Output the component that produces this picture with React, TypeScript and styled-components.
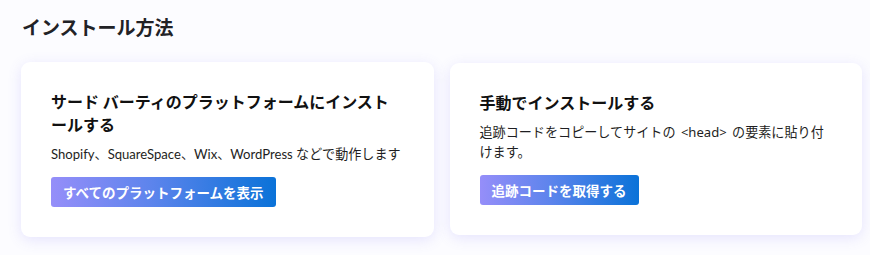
import styled, { createGlobalStyle } from "styled-components"

const GlobalStyle = createGlobalStyle`
    html, body {
        margin: 0;
        padding: 0;
        background-color: #fcfcff;
    }
    body {
        font-family: Lato, "Noto Sans CJK JP", sans-serif;
        color: #1b1b1f;
    }
`

const Page = styled.div`
    padding: 13px 8px 20px 21px;
`

const Heading = styled.h2`
    margin: 0 0 21px 1px;
    font-family: "Noto Sans CJK JP", sans-serif;
    font-size: 19px;
    line-height: 28px;
    font-weight: 700;
    color: #222226;
`

const CardGrid = styled.div`
    display: grid;
    grid-template-columns: 1fr 1fr;
    gap: 16px;
    align-items: start;
`

const Card = styled.div<{ $top?: number }>`
    background-color: #fff;
    border-radius: 9px;
    padding: 28px 30px 30px;
    margin-top: ${({ $top }) => $top ?? 0}px;
    box-shadow: 0 3px 14px rgba(110, 100, 245, 0.16);
`

const CardTitle = styled.h3`
    margin: 0 0 8px;
    font-family: "Noto Sans CJK JP", sans-serif;
    font-size: 16px;
    line-height: 23px;
    font-weight: 700;
    color: #111;
`

const CardText = styled.p`
    margin: 0 0 13px;
    font-size: 13.1px;
    line-height: 20px;
    color: #1e1e22;
`

const Code = styled.span`
    font-family: "Noto Sans", sans-serif;
    margin: 0 2px;
`

const GradientBtn = styled.button`
    display: inline-flex;
    align-items: center;
    height: 30px;
    padding: 0 12px;
    border: none;
    border-radius: 3px;
    background: linear-gradient(90deg, #958ef9 0%, #5c84ec 45%, #0a72d8 100%);
    color: #fff;
    font-family: "Noto Sans CJK JP", sans-serif;
    font-size: 13.5px;
    font-weight: 700;
    cursor: pointer;
`

export default function App() {
    return (
        <>
            <GlobalStyle />
            <Page>
                <Heading>インストール方法</Heading>
                <CardGrid>
                    <Card>
                        <CardTitle>サード バーティのプラットフォームにインストールする</CardTitle>
                        <CardText>Shopify、SquareSpace、Wix、WordPress などで動作します</CardText>
                        <GradientBtn>すべてのプラットフォームを表示</GradientBtn>
                    </Card>
                    <Card $top={1}>
                        <CardTitle>手動でインストールする</CardTitle>
                        <CardText>
                            追跡コードをコピーしてサイトの <Code>&lt;head&gt;</Code> の要素に貼り付けます。
                        </CardText>
                        <GradientBtn>追跡コードを取得する</GradientBtn>
                    </Card>
                </CardGrid>
            </Page>
        </>
    )
}
